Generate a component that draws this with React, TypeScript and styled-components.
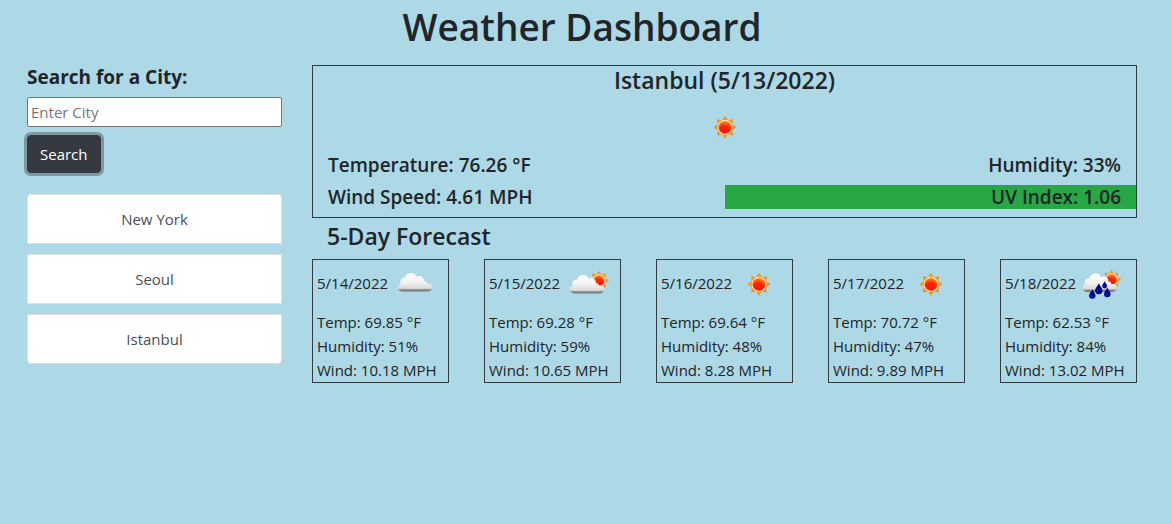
import React from "react";
import styled, { createGlobalStyle } from "styled-components";

const GlobalStyle = createGlobalStyle`
  *, *::before, *::after { box-sizing: border-box; }
  body {
    margin: 0;
    background: #add8e6;
    color: #212529;
    font-family: "Open Sans", "Noto Sans", sans-serif;
    font-size: 15px;
    line-height: 24px;
  }
`;

const Page = styled.div`
  max-width: 1172px;
  margin: 0 auto;
  padding: 3px 35px 24px 27px;
`;

const Title = styled.h1`
  margin: 0 0 14px;
  font-size: 37px;
  font-weight: 600;
  line-height: 48px;
  text-align: center;
`;

const Columns = styled.div`
  display: grid;
  grid-template-columns: minmax(0, 17fr) minmax(0, 55fr);
  gap: 30px;
  align-items: start;
`;

const SearchForm = styled.form`
  display: flex;
  flex-direction: column;
  align-items: flex-start;
  gap: 8px;
`;

const SearchLabel = styled.label`
  font-size: 19px;
  font-weight: 700;
`;

const SearchInput = styled.input`
  width: 100%;
  height: 30px;
  padding: 1px 3px;
  border: 1px solid #767676;
  border-radius: 2px;
  background: #fff;
  color: inherit;
  font: inherit;
  &::placeholder { color: #757575; }
`;

const SearchButton = styled.button`
  padding: 6px 12px;
  border: 1px solid #343a40;
  border-radius: 4px;
  background: #343a40;
  color: #fff;
  font: inherit;
  box-shadow: 0 0 0 3px rgba(82, 88, 93, 0.5);
  cursor: pointer;
`;

const History = styled.div`
  display: flex;
  flex-direction: column;
  gap: 10px;
  margin-top: 21px;
`;

const HistoryButton = styled.button`
  padding: 12px 20px;
  border: 1px solid #dfdfdf;
  background: #fff;
  color: #495057;
  font: inherit;
  cursor: pointer;
  &:first-child { border-radius: 4px 4px 0 0; }
  &:last-child { border-radius: 0 0 4px 4px; }
`;

const Current = styled.section`
  display: flex;
  flex-direction: column;
  align-items: center;
  border: 1px solid #343a40;
`;

const Heading = styled.h2<{ $section?: boolean }>`
  margin: ${(p) => (p.$section ? "4px 15px 8px" : "0 0 8px")};
  font-size: 23px;
  font-weight: 600;
  line-height: 29px;
`;

const Stats = styled.div`
  display: grid;
  grid-template-columns: 1fr 1fr;
  row-gap: 8px;
  width: 100%;
  padding-bottom: 8px;
`;

const Stat = styled.div<{ $right?: boolean; $uv?: boolean }>`
  padding: 0 15px;
  background: ${(p) => (p.$uv ? "#28a745" : "transparent")};
  font-size: 19px;
  font-weight: 600;
  text-align: ${(p) => (p.$right ? "right" : "left")};
`;

const Forecast = styled.div`
  display: grid;
  grid-template-columns: repeat(5, minmax(0, 1fr));
  gap: 35px;
`;

const DayCard = styled.article`
  padding: 0 4px;
  border: 1px solid #343a40;
  white-space: nowrap;
`;

const DayHead = styled.div`
  display: flex;
  align-items: center;
  justify-content: space-between;
  margin-right: 4px;
`;

const DayDate = styled.span`
  padding-bottom: 4px;
`;

const Icon = styled.svg`
  display: block;
  flex: none;
  width: 50px;
  height: 50px;
`;

type Kind = "sun" | "cloud" | "partly" | "rain";

const RAYS = [0, 45, 90, 135, 180, 225, 270, 315];

const Sun = ({ x, y, scale = 1 }: { x: number; y: number; scale?: number }) => (
  <g transform={`translate(${x} ${y}) scale(${scale})`}>
    {RAYS.map((a) => (
      <path key={a} d="M-3 -7 L3 -7 L.5 -11 L-.5 -11 Z" fill="#f2962a" transform={`rotate(${a})`} />
    ))}
    <circle r="7.5" fill="#ffe3b0" />
    <circle r="6.4" fill="url(#core)" />
  </g>
);

const Cloud = ({ x, y }: { x: number; y: number }) => (
  <path
    transform={`translate(${x} ${y})`}
    fill="url(#cloud)"
    d="M4 19 C-.8 18.5 -1 12.5 2.6 11 C1.8 7 4 5 7 5.3 C8.5 -.8 17 -.8 18.6 4.2 C22 2.4 26 4.5 26 8.6 C28 8.4 28.6 9.5 28.8 10.9 C33.5 10.7 35.3 13.5 34 16 C33.3 18 32 19 30 19 Z"
  />
);

const Drop = ({ x, y, scale }: { x: number; y: number; scale: number }) => (
  <g transform={`translate(${x} ${y}) scale(${scale})`}>
    <path d="M0 -5 C.9 -2.6 3.2 -.9 3.2 1.4 A3.2 3.2 0 0 1 -3.2 1.4 C-3.2 -.9 -.9 -2.6 0 -5 Z" fill="#00008d" />
    <path d="M-1.4 .2 Q-1.9 2.3 -.2 3" fill="none" stroke="#2436b4" strokeWidth=".8" />
  </g>
);

const WeatherIcon = ({ kind, label }: { kind: Kind; label: string }) => (
  <Icon viewBox="0 0 50 50" role="img" aria-label={label}>
    {kind === "sun" && <Sun x={25} y={24.3} />}
    {kind === "cloud" && <Cloud x={8} y={12.5} />}
    {kind === "partly" && (
      <>
        <Sun x={37} y={20.5} scale={0.85} />
        <Cloud x={8} y={14.5} />
      </>
    )}
    {kind === "rain" && (
      <>
        <Sun x={33.5} y={19.5} scale={0.85} />
        <Cloud x={4.5} y={13} />
        <Drop x={14.3} y={34.2} scale={1} />
        <Drop x={20.8} y={29} scale={1.15} />
        <Drop x={26.6} y={25} scale={0.75} />
        <Drop x={29.3} y={32.6} scale={1} />
      </>
    )}
  </Icon>
);

const IconPaints = () => (
  <svg width="0" height="0" style={{ display: "block" }} aria-hidden="true">
    <defs>
      <radialGradient id="core" cx=".45" cy=".85" r=".9">
        <stop offset="0" stopColor="#ff1500" />
        <stop offset=".5" stopColor="#ff2400" />
        <stop offset="1" stopColor="#ffa12b" />
      </radialGradient>
      <linearGradient id="cloud" x1="0" y1="0" x2="0" y2="1">
        <stop offset="0" stopColor="#ffffff" />
        <stop offset=".5" stopColor="#f3f3f3" />
        <stop offset=".83" stopColor="#d9d9d9" />
        <stop offset=".9" stopColor="#8c8c8c" />
        <stop offset="1" stopColor="#707478" />
      </linearGradient>
    </defs>
  </svg>
);

const cities = ["New York", "Seoul", "Istanbul"];

const days: { date: string; kind: Kind; label: string; temp: string; humidity: string; wind: string }[] = [
  { date: "5/14/2022", kind: "cloud", label: "Cloudy", temp: "69.85", humidity: "51", wind: "10.18" },
  { date: "5/15/2022", kind: "partly", label: "Partly cloudy", temp: "69.28", humidity: "59", wind: "10.65" },
  { date: "5/16/2022", kind: "sun", label: "Sunny", temp: "69.64", humidity: "48", wind: "8.28" },
  { date: "5/17/2022", kind: "sun", label: "Sunny", temp: "70.72", humidity: "47", wind: "9.89" },
  { date: "5/18/2022", kind: "rain", label: "Rain", temp: "62.53", humidity: "84", wind: "13.02" },
];

export default function App() {
  return (
    <Page>
      <GlobalStyle />
      <IconPaints />
      <Title>Weather Dashboard</Title>
      <Columns>
        <aside>
          <SearchForm onSubmit={(e) => e.preventDefault()}>
            <SearchLabel htmlFor="city">Search for a City:</SearchLabel>
            <SearchInput id="city" type="text" placeholder="Enter City" />
            <SearchButton type="submit">Search</SearchButton>
          </SearchForm>
          <History>
            {cities.map((city) => (
              <HistoryButton key={city} type="button">{city}</HistoryButton>
            ))}
          </History>
        </aside>
        <main>
          <Current>
            <Heading>Istanbul (5/13/2022)</Heading>
            <WeatherIcon kind="sun" label="Sunny" />
            <Stats>
              <Stat>Temperature: 76.26 °F</Stat>
              <Stat $right>Humidity: 33%</Stat>
              <Stat>Wind Speed: 4.61 MPH</Stat>
              <Stat $right $uv>UV Index: 1.06</Stat>
            </Stats>
          </Current>
          <Heading $section>5-Day Forecast</Heading>
          <Forecast>
            {days.map((d) => (
              <DayCard key={d.date}>
                <DayHead>
                  <DayDate>{d.date}</DayDate>
                  <WeatherIcon kind={d.kind} label={d.label} />
                </DayHead>
                <div>Temp: {d.temp} °F</div>
                <div>Humidity: {d.humidity}%</div>
                <div>Wind: {d.wind} MPH</div>
              </DayCard>
            ))}
          </Forecast>
        </main>
      </Columns>
    </Page>
  );
}
